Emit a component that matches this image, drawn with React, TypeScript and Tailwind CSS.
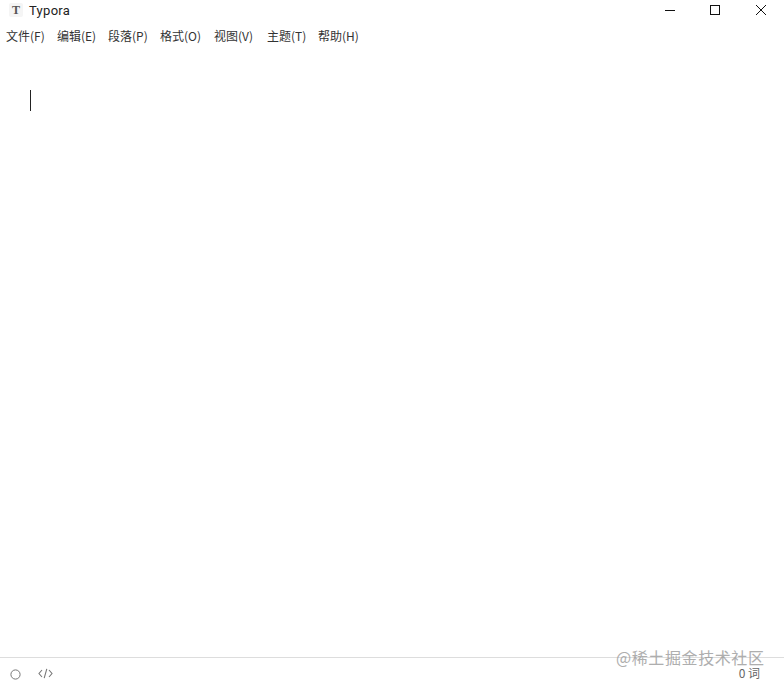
const FONT = "font-['Noto_Sans_CJK_SC','Noto_Sans',sans-serif]";
const menus = [
  ['文件(F)', 'w-[39px] mr-[12px]'],
  ['编辑(E)', 'w-[39px] mr-[12px]'],
  ['段落(P)', 'w-[39px] mr-[13px]'],
  ['格式(O)', 'w-[42px] mr-[12px]'],
  ['视图(V)', 'w-[41px] mr-[12px]'],
  ['主题(T)', 'w-[39px] mr-[12px]'],
  ['帮助(H)', 'w-[41px]'],
];

export default function App() {
  return (
    <div className={`relative flex h-[687px] w-[784px] flex-col overflow-hidden bg-white text-[#333] ${FONT}`}>
      <header className="flex h-[24px] items-start">
        <div className="ml-[9px] mt-[3px] flex h-[14px] w-[14px] items-center justify-center rounded-[2px] bg-[#f5f5f5] font-['Liberation_Serif',serif] text-[12px] font-bold leading-none text-[#555]">T</div>
        <span className="ml-[6px] mt-[2px] font-['Roboto',sans-serif] text-[13px] leading-[17px] tracking-[0.3px] text-[#222]">Typora</span>
        <div className="ml-auto flex">
          <svg width="46" height="22" viewBox="0 0 46 22"><path d="M19 10.5h10" stroke="#111" strokeWidth="1" fill="none" /></svg>
          <svg width="46" height="22" viewBox="0 0 46 22"><rect x="18.5" y="5.5" width="9" height="9" stroke="#111" strokeWidth="1" fill="none" /></svg>
          <svg width="46" height="22" viewBox="0 0 46 22"><path d="M18 5l10 10M28 5L18 15" stroke="#111" strokeWidth="1" fill="none" /></svg>
        </div>
      </header>
      <nav className="ml-[6px] mt-[2px] mb-[1px] flex h-[20px] items-center text-[12px] leading-[20px] text-[#333]">
        {menus.map(([label, cls]) => (
          <span key={label} className={`${cls} whitespace-nowrap`}>{label}</span>
        ))}
      </nav>
      <main className="flex-1 pl-[30px] pt-[43px]">
        <div className="h-[21px] w-px bg-[#222]" />
      </main>
      <footer className="flex h-[30px] items-center border-t border-[#ddd] pb-[2px] pl-[10px] pr-[24px]">
        <svg width="11" height="11" viewBox="0 0 11 11" className="mt-[5px]"><circle cx="5.5" cy="5.5" r="4.6" stroke="#777" strokeWidth="1" fill="none" /></svg>
        <svg width="15" height="11" viewBox="0 0 15 11" className="ml-[17px] mt-[3px]"><path d="M4 2L1 5.5 4 9M11 2l3 3.5L11 9M8.8 .8L6.2 10.2" stroke="#777" strokeWidth="1.1" fill="none" /></svg>
        <span className="ml-auto mt-[3px] text-[12px] leading-[16px] text-[#666]">0 词</span>
      </footer>
      <div className="absolute left-[616px] top-[647px] whitespace-nowrap text-[16px] leading-[20px] tracking-[0.6px] text-[#9a9a9a] opacity-80">@稀土掘金技术社区</div>
    </div>
  );
}
